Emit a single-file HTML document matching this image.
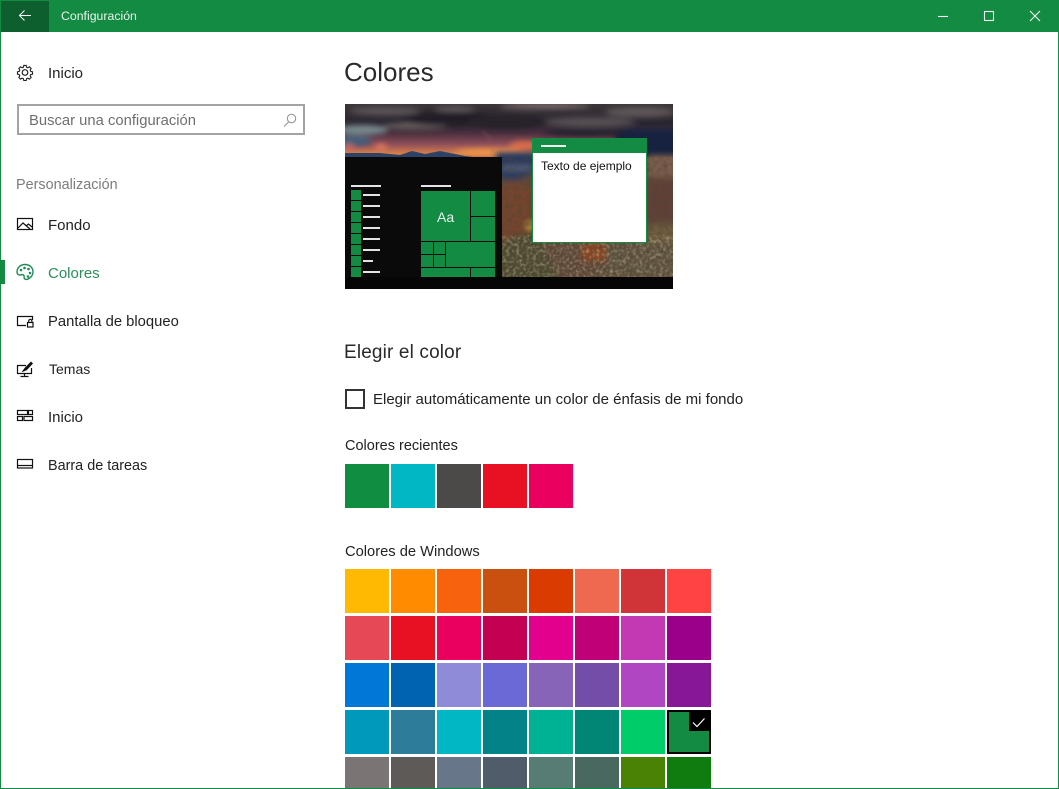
<!DOCTYPE html>
<html lang="es"><head><meta charset="utf-8"><title>Configuración</title>
<style>
html,body{margin:0;padding:0;background:#fff;width:1059px;height:789px;overflow:hidden}
#w{position:relative;width:1059px;height:789px;overflow:hidden;font-family:"Liberation Sans",sans-serif;color:#111}
.t{position:absolute;white-space:nowrap;font-size:14.6px;line-height:20px}
.b{position:absolute}
.s{position:absolute;width:44px;height:44px}
svg{position:absolute;left:0;top:0}
</style></head><body><div id="w">
<div class="b" style="left:0;top:0;width:1059px;height:32px;background:#148b42"></div>
<div class="b" style="left:1px;top:1px;width:48px;height:31px;background:#0e5f2e"></div>
<div class="t" style="left:61px;top:6px;font-size:12.3px;color:#e8f4ec">Configuración</div>

<div class="t" style="left:48px;top:64px;font-size:15px;color:#222">Inicio</div>
<div class="b" style="left:17px;top:104px;width:284px;height:27px;border:2px solid #a3a3a3"></div>
<div class="t" style="left:29px;top:111px;font-size:14.8px;color:#6f6f6f">Buscar una configuración</div>
<div class="t" style="left:16px;top:175px;font-size:14.4px;color:#7c7c7c">Personalización</div>
<div class="t" style="left:48px;top:216px;font-size:15px;color:#222">Fondo</div>
<div class="b" style="left:1px;top:260px;width:4px;height:24px;background:#148b42"></div>
<div class="t" style="left:48px;top:264px;font-size:15px;color:#2a8f5c">Colores</div>
<div class="t" style="left:48px;top:312px;font-size:14.8px;color:#222">Pantalla de bloqueo</div>
<div class="t" style="left:49px;top:359px;font-size:14px;color:#222">Temas</div>
<div class="t" style="left:48px;top:408px;font-size:15px;color:#222">Inicio</div>
<div class="t" style="left:48px;top:456px;font-size:14.4px;color:#222">Barra de tareas</div>

<div class="t" style="left:344px;top:55px;font-size:26px;line-height:34px;color:#2a2a2a">Colores</div>

<svg width="1059" height="789" viewBox="0 0 1059 789" style="z-index:0">
<defs>
<filter id="bl" x="-30%" y="-60%" width="160%" height="220%"><feGaussianBlur stdDeviation="3"/></filter>
<filter id="bl2" x="-30%" y="-100%" width="160%" height="300%"><feGaussianBlur stdDeviation="1.6"/></filter>
<filter id="noise" x="0" y="0" width="100%" height="100%"><feTurbulence type="fractalNoise" baseFrequency="0.22" numOctaves="2" seed="4"/><feColorMatrix values="0 0 0 0 0.07 0 0 0 0 0.06 0 0 0 0 0.03 1.7 0 0 0 -0.68"/></filter>
<filter id="noise2" x="0" y="0" width="100%" height="100%"><feTurbulence type="fractalNoise" baseFrequency="0.3" numOctaves="2" seed="9"/><feColorMatrix values="0 0 0 0 0.75 0 0 0 0 0.68 0 0 0 0 0.45 1.9 0 0 0 -0.85"/></filter>
<linearGradient id="sky" x1="0" y1="0" x2="0" y2="1"><stop offset="0" stop-color="#3d3538"/><stop offset=".35" stop-color="#2a2630"/><stop offset=".55" stop-color="#4e3140"/><stop offset=".75" stop-color="#91505a"/><stop offset=".92" stop-color="#d98048"/><stop offset="1" stop-color="#a5654d"/></linearGradient>
<clipPath id="pv"><rect x="345" y="104" width="328" height="185"/></clipPath>
</defs>
<g clip-path="url(#pv)">
<rect x="345" y="104" width="328" height="54" fill="url(#sky)"/>
<g filter="url(#bl)">
<rect x="615" y="128" width="70" height="34" fill="#152040"/>
<ellipse cx="362" cy="130" rx="26" ry="5" fill="#76898c"/>
<ellipse cx="352" cy="141" rx="20" ry="5" fill="#3f5f7a"/>
<ellipse cx="415" cy="126" rx="32" ry="3" fill="#6a6462"/>
<ellipse cx="450" cy="119" rx="50" ry="7" fill="#211e25"/>
<ellipse cx="385" cy="111" rx="35" ry="4" fill="#5c5559"/>
<ellipse cx="455" cy="109" rx="20" ry="2" fill="#6a6467"/>
<ellipse cx="545" cy="106" rx="45" ry="2" fill="#8f8182"/>
<ellipse cx="505" cy="122" rx="40" ry="7" fill="#25222b"/>
<ellipse cx="590" cy="122" rx="45" ry="5" fill="#575052"/>
<ellipse cx="640" cy="112" rx="35" ry="5" fill="#5f5659"/>
<ellipse cx="585" cy="132" rx="42" ry="4" fill="#23242f"/>
<ellipse cx="381" cy="147" rx="6" ry="3" fill="#e97d5f"/>
<ellipse cx="349" cy="147" rx="5" ry="2.5" fill="#d5705f"/>
<ellipse cx="490" cy="152" rx="35" ry="3" fill="#f59a4b"/>
<ellipse cx="525" cy="146" rx="16" ry="5" fill="#db6c48"/>
</g>
<path d="M345 157V153L380 153 400 155 412 151 425 154 440 151 465 156 480 158V158Z" fill="#2e4266"/>
<path d="M482 131L490 138 493 155" fill="none" stroke="#9a5a68" stroke-width="1" filter="url(#bl2)" opacity=".7"/>
<rect x="502" y="157" width="171" height="120" fill="#61493a"/>
<g filter="url(#bl)">
<path d="M496 152H536V172L515 181 496 178Z" fill="#2a3a60"/>
<rect x="502" y="166" width="30" height="4" fill="#5a6580"/>
<path d="M498 187L515 181 534 190V232L505 242H498Z" fill="#74452f"/>
<path d="M498 242L534 230 545 250 560 282H498Z" fill="#4f4c30"/>
<rect x="647" y="155" width="30" height="22" fill="#7a5d4d"/>
<rect x="647" y="180" width="30" height="40" fill="#603f38"/>
<rect x="647" y="225" width="30" height="30" fill="#6f5b3f"/>
<rect x="582" y="243" width="24" height="18" fill="#8a4420"/>
<rect x="606" y="243" width="70" height="34" fill="#5f5240"/>
<circle cx="530" cy="226" r="4" fill="#c8963f"/>
</g>
<rect x="502" y="157" width="171" height="120" filter="url(#noise)" opacity=".7"/>
<rect x="502" y="235" width="171" height="42" filter="url(#noise2)" opacity=".55"/>
<rect x="345" y="157" width="157" height="120" fill="#0a0a0a"/>
<rect x="345" y="277" width="328" height="12" fill="#060606"/>
<g fill="#148b42">
<rect x="351" y="190" width="10" height="10"/><rect x="351" y="201" width="10" height="10"/><rect x="351" y="212" width="10" height="10"/><rect x="351" y="223" width="10" height="10"/><rect x="351" y="234" width="10" height="10"/><rect x="351" y="245" width="10" height="10"/><rect x="351" y="256" width="10" height="10"/><rect x="351" y="267" width="10" height="10"/>
<rect x="421" y="191" width="74" height="86"/>
</g>
<g fill="#e4e4e4">
<rect x="351" y="185" width="30" height="2"/><rect x="421" y="185" width="30" height="2"/>
<rect x="363" y="194" width="17" height="2"/><rect x="363" y="205" width="17" height="2"/><rect x="363" y="216" width="17" height="2"/><rect x="363" y="227" width="17" height="2"/><rect x="363" y="238" width="17" height="2"/><rect x="363" y="249" width="17" height="2"/><rect x="363" y="260" width="10" height="2"/><rect x="363" y="271" width="17" height="2"/>
</g>
<g fill="#0a0a0a">
<rect x="470" y="191" width="1" height="50"/><rect x="471" y="216" width="24" height="1"/>
<rect x="421" y="241" width="74" height="1"/><rect x="433" y="242" width="1" height="25"/><rect x="445" y="242" width="1" height="25"/>
<rect x="421" y="254" width="24" height="1"/><rect x="421" y="267" width="74" height="1"/><rect x="470" y="268" width="1" height="9"/>
</g>
<rect x="532" y="138" width="115" height="105" fill="#148b42"/>
<rect x="533" y="153" width="113" height="89" fill="#fff"/>
<rect x="541" y="145" width="25" height="2" fill="#eef7f1"/>
</g>

<g fill="none" stroke="#f2f8f4" stroke-width="1.1">
<path d="M19.5 15.5H31M24.5 10.5L19.5 15.5 24.5 20.5"/>
<path d="M938 16.5H948"/>
<rect x="984.5" y="11.5" width="9" height="9"/>
<path d="M1030 11L1040 21M1040 11L1030 21"/>
</g>
<g fill="none" stroke="#222" stroke-width="1.2">
<circle cx="25" cy="72.5" r="2.8"/>
<path transform="translate(25 72.5) scale(.8) translate(-25 -73.4)" stroke-width="1.4" d="M23.5 64.6h3l.5 2.2 1.6.7 2-1.2 2.1 2.1-1.2 2 .7 1.6 2.2.5v3l-2.2.5-.7 1.6 1.2 2-2.1 2.1-2-1.2-1.6.7-.5 2.2h-3l-.5-2.2-1.6-.7-2 1.2-2.1-2.1 1.2-2-.7-1.6-2.2-.5v-3l2.2-.5.7-1.6-1.2-2 2.1-2.1 2 1.2 1.6-.7z"/>
</g>
<g fill="none" stroke="#8f8f8f" stroke-width="1">
<circle cx="291.5" cy="118.5" r="4.2"/><path d="M288.5 122L284 126.5"/>
</g>
<g fill="none" stroke="#111" stroke-width="1.2">
<rect x="17.5" y="218.5" width="15" height="11"/>
<path d="M18 228L23 223 30 229M26 226L28.5 224 32 227"/>
</g>
<g fill="none" stroke="#1f8a54" stroke-width="1.4">
<path d="M25 264.5c-4.5 0-8 3.2-8 7.3 0 2.6 1.8 3.6 3.6 3.1 1.8-.5 3-.4 3.4.8.4 1.3-.2 2.1.5 3 .7.9 2 .9 3.2.5 3.1-1.2 5.3-4 5.3-7.2 0-4.4-3.3-7.5-8-7.5z"/>
</g>
<g fill="#1f8a54"><circle cx="21" cy="270" r="1.3"/><circle cx="24.5" cy="268" r="1.3"/><circle cx="28.5" cy="269" r="1.3"/><circle cx="30" cy="273" r="1.3"/><circle cx="28" cy="276.5" r="1.3"/></g>
<g fill="none" stroke="#111" stroke-width="1.2">
<path d="M26 325.5H17.5V316.5H32.5V320"/>
<rect x="27.5" y="322.5" width="5.5" height="4.5"/>
<path d="M28.7 322.5V321a1.6 1.6 0 0 1 3.2 0V322.5"/>
</g>
<g fill="none" stroke="#111" stroke-width="1.2">
<path d="M26 365.5H17.5V373.5H31.5V368"/>
<path d="M24.5 374V376M20.5 376.5H28.5"/>
<path d="M22.5 371.5L25 368 31 362 32.5 363.5 26.5 370Z" fill="#111" stroke-width=".7"/>
</g>
<g fill="none" stroke="#111" stroke-width="1.2">
<rect x="17.5" y="410.5" width="10" height="4"/><rect x="28.5" y="410.5" width="4" height="4"/>
<rect x="17.5" y="416.5" width="5" height="4"/><rect x="24" y="416.5" width="8.5" height="4"/>
</g>
<g fill="none" stroke="#111" stroke-width="1.2">
<rect x="17.5" y="459.5" width="15" height="8.5"/><path d="M18 465.5H32"/>
</g>
</svg>

<div class="t" style="left:541px;top:156px;font-size:12px;color:#111;z-index:1">Texto de ejemplo</div>
<div class="t" style="left:437px;top:207px;font-size:14px;color:#eaf5ee;z-index:1">Aa</div>

<div class="t" style="left:344px;top:341px;font-size:19px;line-height:24px;letter-spacing:.15px;color:#2a2a2a">Elegir el color</div>
<div class="b" style="left:345px;top:389px;width:16px;height:16px;border:2px solid #333"></div>
<div class="t" style="left:373px;top:390px;font-size:15px;color:#222">Elegir automáticamente un color de énfasis de mi fondo</div>
<div class="t" style="left:345px;top:436px;color:#222;font-size:14.5px">Colores recientes</div>
<div class="s" style="left:345px;top:464px;background:#118d41"></div>
<div class="s" style="left:391px;top:464px;background:#00b7c3"></div>
<div class="s" style="left:437px;top:464px;background:#4c4a48"></div>
<div class="s" style="left:483px;top:464px;background:#e81123"></div>
<div class="s" style="left:529px;top:464px;background:#ea005e"></div>
<div class="t" style="left:345px;top:542px;font-size:14.7px;color:#222">Colores de Windows</div>

<div class="s" style="left:345px;top:569px;background:#ffb900"></div>
<div class="s" style="left:391px;top:569px;background:#ff8c00"></div>
<div class="s" style="left:437px;top:569px;background:#f7630c"></div>
<div class="s" style="left:483px;top:569px;background:#ca5010"></div>
<div class="s" style="left:529px;top:569px;background:#da3b01"></div>
<div class="s" style="left:575px;top:569px;background:#ef6950"></div>
<div class="s" style="left:621px;top:569px;background:#d13438"></div>
<div class="s" style="left:667px;top:569px;background:#ff4343"></div>

<div class="s" style="left:345px;top:616px;background:#e74856"></div>
<div class="s" style="left:391px;top:616px;background:#e81123"></div>
<div class="s" style="left:437px;top:616px;background:#ea005e"></div>
<div class="s" style="left:483px;top:616px;background:#c30052"></div>
<div class="s" style="left:529px;top:616px;background:#e3008c"></div>
<div class="s" style="left:575px;top:616px;background:#bf0077"></div>
<div class="s" style="left:621px;top:616px;background:#c239b3"></div>
<div class="s" style="left:667px;top:616px;background:#9a0089"></div>

<div class="s" style="left:345px;top:663px;background:#0078d7"></div>
<div class="s" style="left:391px;top:663px;background:#0063b1"></div>
<div class="s" style="left:437px;top:663px;background:#8e8cd8"></div>
<div class="s" style="left:483px;top:663px;background:#6b69d6"></div>
<div class="s" style="left:529px;top:663px;background:#8764b8"></div>
<div class="s" style="left:575px;top:663px;background:#744da9"></div>
<div class="s" style="left:621px;top:663px;background:#b146c2"></div>
<div class="s" style="left:667px;top:663px;background:#881798"></div>

<div class="s" style="left:345px;top:710px;background:#0099bc"></div>
<div class="s" style="left:391px;top:710px;background:#2d7d9a"></div>
<div class="s" style="left:437px;top:710px;background:#00b7c3"></div>
<div class="s" style="left:483px;top:710px;background:#038387"></div>
<div class="s" style="left:529px;top:710px;background:#00b294"></div>
<div class="s" style="left:575px;top:710px;background:#018574"></div>
<div class="s" style="left:621px;top:710px;background:#00cc6a"></div>
<div class="s" style="left:667px;top:710px;background:#000">
<div class="b" style="left:2px;top:2px;width:40px;height:40px;background:#148b42"></div>
<div class="b" style="left:22px;top:0;width:22px;height:21px;background:#000"></div>
<svg width="44" height="44" viewBox="0 0 44 44"><path d="M26 12.5L30 16.5 37.5 8.5" fill="none" stroke="#fff" stroke-width="1.2"/></svg>
</div>

<div class="s" style="left:345px;top:757px;height:31px;background:#7a7574"></div>
<div class="s" style="left:391px;top:757px;height:31px;background:#5d5a58"></div>
<div class="s" style="left:437px;top:757px;height:31px;background:#68768a"></div>
<div class="s" style="left:483px;top:757px;height:31px;background:#515c6b"></div>
<div class="s" style="left:529px;top:757px;height:31px;background:#567c73"></div>
<div class="s" style="left:575px;top:757px;height:31px;background:#486860"></div>
<div class="s" style="left:621px;top:757px;height:31px;background:#498205"></div>
<div class="s" style="left:667px;top:757px;height:31px;background:#107c10"></div>

<div class="b" style="left:0;top:0;width:1057px;height:787px;border:1px solid #148b42;z-index:5"></div>
</div></body></html>
